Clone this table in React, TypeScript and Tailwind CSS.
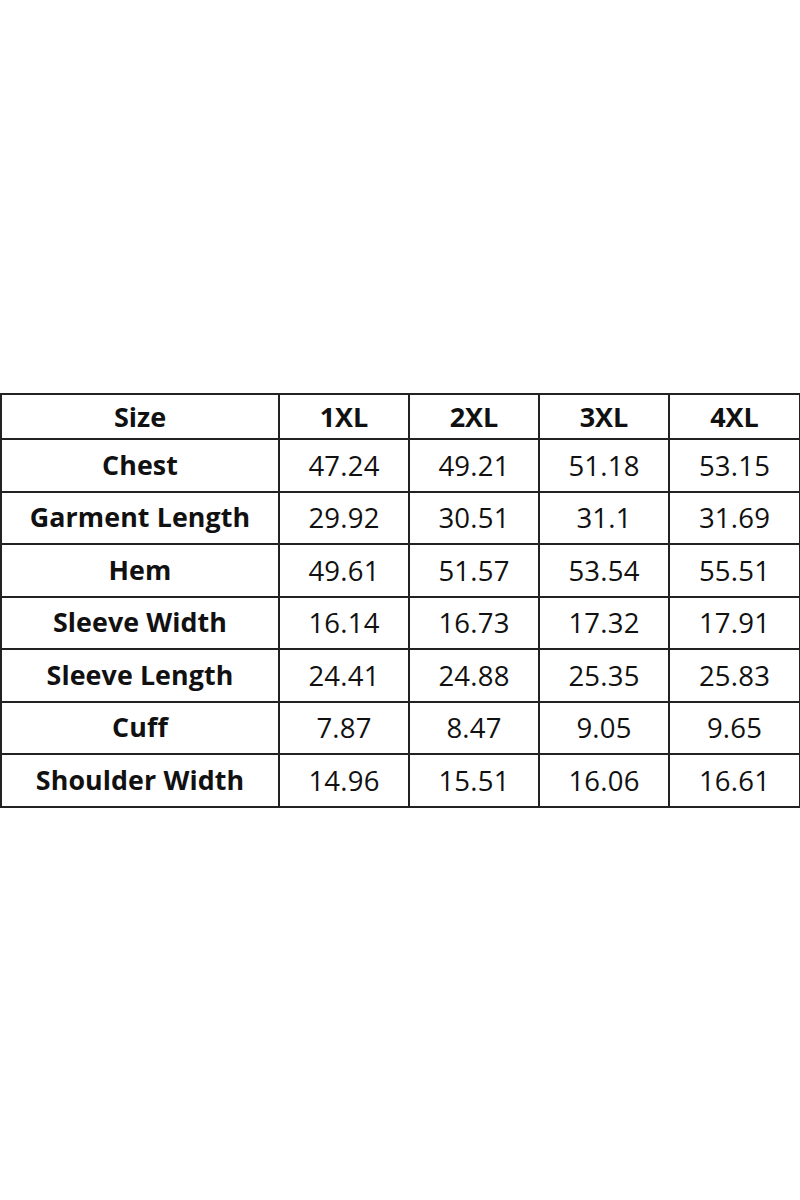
import React from "react";

const rows: [string, string, string, string, string][] = [
  ["Chest", "47.24", "49.21", "51.18", "53.15"],
  ["Garment Length", "29.92", "30.51", "31.1", "31.69"],
  ["Hem", "49.61", "51.57", "53.54", "55.51"],
  ["Sleeve Width", "16.14", "16.73", "17.32", "17.91"],
  ["Sleeve Length", "24.41", "24.88", "25.35", "25.83"],
  ["Cuff", "7.87", "8.47", "9.05", "9.65"],
  ["Shoulder Width", "14.96", "15.51", "16.06", "16.61"],
];

export default function App() {
  return (
    <div
      className="w-[800px] h-[1200px] bg-white pt-[393px] text-[#111]"
      style={{ fontFamily: '"Open Sans", "Noto Sans", sans-serif' }}
    >
      <table className="border-collapse w-[799px] table-fixed">
        <colgroup>
          <col className="w-[278px]" />
          <col className="w-[130px]" />
          <col className="w-[130px]" />
          <col className="w-[130px]" />
          <col className="w-[131px]" />
        </colgroup>
        <thead>
          <tr className="h-[45px]">
            {["Size", "1XL", "2XL", "3XL", "4XL"].map((h) => (
              <th
                key={h}
                className="border-2 border-[#222] text-center font-bold text-[27px] p-0 leading-none"
              >
                {h}
              </th>
            ))}
          </tr>
        </thead>
        <tbody>
          {rows.map((r) => (
            <tr key={r[0]} className="h-[52.5px]">
              {r.map((c, i) => (
                <td
                  key={i}
                  className={
                    "border-2 border-[#222] text-center p-0 leading-none " +
                    (i === 0 ? "font-bold text-[26.8px] tracking-[0.1px]" : "font-normal text-[27.5px] tracking-[0.2px]")
                  }
                >
                  {c}
                </td>
              ))}
            </tr>
          ))}
        </tbody>
      </table>
    </div>
  );
}
